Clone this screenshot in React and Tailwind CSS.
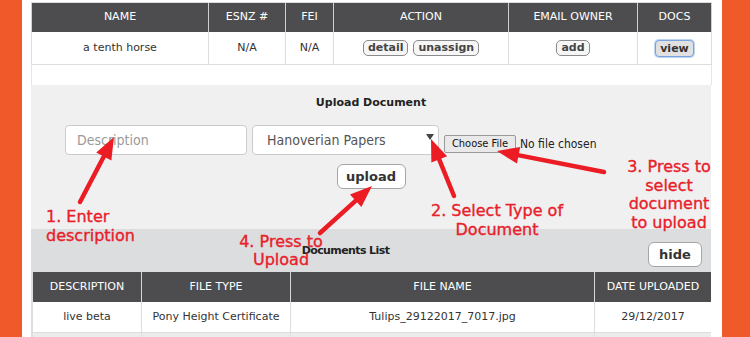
import React from "react";

function Arrow({ x1, y1, x2, y2 }) {
  const L = 22;
  const W = 8.5;
  const dx = x2 - x1;
  const dy = y2 - y1;
  const len = Math.sqrt(dx * dx + dy * dy);
  const ux = dx / len;
  const uy = dy / len;
  const bx = x2 - ux * L;
  const by = y2 - uy * L;
  const px = -uy;
  const py = ux;
  const pts = `${x2},${y2} ${bx + px * W},${by + py * W} ${bx - px * W},${by - py * W}`;
  return (
    <g>
      <line x1={x1} y1={y1} x2={bx + ux * 2} y2={by + uy * 2} stroke="#ec1c24" strokeWidth="4.5" strokeLinecap="round" />
      <polygon points={pts} fill="#ec1c24" />
    </g>
  );
}

function SmallBtn({ children, view }) {
  return (
    <span
      className={
        view
          ? "inline-block px-[4px] h-[17px] leading-[15px] rounded-[4px] border border-[#7ba4dc] bg-[#e1e1e1] font-bold text-[11px] text-[#333] shadow-[0_0_0_1px_#bcd3f0]"
          : "inline-block px-[4px] h-[16px] leading-[14px] rounded-[5px] border border-[#8a8a8a] bg-[#f6f6f6] font-bold text-[11px] text-[#444]"
      }
    >
      {children}
    </span>
  );
}

export default function App() {
  const topCols = [
    { w: "w-[178px] border-l", h: "NAME", d: "a tenth horse" },
    { w: "w-[77px]", h: "ESNZ #", d: "N/A" },
    { w: "w-[48px]", h: "FEI", d: "N/A" },
    { w: "w-[175px]", h: "ACTION", d: "action" },
    { w: "w-[129px]", h: "EMAIL OWNER", d: "add" },
    { w: "w-[74px]", h: "DOCS", d: "view" },
  ];
  const docCols = [
    { w: "w-[109px]", h: "DESCRIPTION", d: "live beta" },
    { w: "w-[149px]", h: "FILE TYPE", d: "Pony Height Certificate" },
    { w: "w-[304px]", h: "FILE NAME", d: "Tulips_29122017_7017.jpg" },
    { w: "w-[116px]", h: "DATE UPLOADED", d: "29/12/2017" },
  ];

  const note = "text-[16px] text-[#e8202a] [-webkit-text-stroke:0.35px_#e8202a]";

  return (
    <div className="relative w-[750px] h-[337px] overflow-hidden bg-[#f05a2a] font-['DejaVu_Sans',sans-serif]">
      <div className="ml-[22px] w-[700px] h-[337px] bg-white pl-[9px] pt-[2px] flex flex-col overflow-hidden">
        {/* Top table */}
        <div className="w-[681px] shrink-0">
          <div className="flex h-[30px] bg-[#4d4d4f] border-t border-[#dddddd]">
            {topCols.map((c, i) => (
              <div
                key={i}
                className={`${c.w} border-r border-[#cfcfcf] flex items-center justify-center text-white text-[11px]`}
              >
                {c.h}
              </div>
            ))}
          </div>
          <div className="flex h-[33px] bg-white border-b border-[#dddddd]">
            {topCols.map((c, i) => (
              <div
                key={i}
                className={`${c.w} border-r border-[#dddddd] flex items-center justify-center text-[#333] text-[11px] gap-[5px]`}
              >
                {i === 3 ? (
                  <>
                    <SmallBtn>detail</SmallBtn>
                    <SmallBtn>unassign</SmallBtn>
                  </>
                ) : i === 4 ? (
                  <SmallBtn>add</SmallBtn>
                ) : i === 5 ? (
                  <SmallBtn view>view</SmallBtn>
                ) : (
                  c.d
                )}
              </div>
            ))}
          </div>
          <div className="h-[20px] border-l border-r border-[#e6e6e6]" />
        </div>

        {/* Upload panel */}
        <div className="w-[680px] h-[144px] shrink-0 bg-[#f0f0f0] flex flex-col">
          <div className="h-[26px] shrink-0 flex items-end justify-center text-[11px] font-bold text-[#222]">
            Upload Document
          </div>
          <div className="mt-[14px] pl-[34px] flex items-center h-[30px] shrink-0">
            <div className="w-[182px] h-[30px] bg-white border border-[#cccccc] rounded-[4px] flex items-center pl-[11px] text-[14px] text-[#9a9a9a] font-['DejaVu_Sans_Condensed','DejaVu_Sans',sans-serif] font-stretch-condensed">
              Description
            </div>
            <div className="ml-[5px] w-[187px] h-[30px] bg-white border border-[#cccccc] rounded-[4px] flex items-center justify-between pl-[14px] pr-[4px] text-[14px] text-[#555] font-['DejaVu_Sans_Condensed','DejaVu_Sans',sans-serif] font-stretch-condensed">
              <span>Hanoverian Papers</span>
              <svg width="8" height="6" viewBox="0 0 8 6" className="mb-[6px]">
                <polygon points="0,0 8,0 4,6" fill="#444" />
              </svg>
            </div>
            <div className="ml-[5px] mt-[8px] w-[72px] h-[18px] bg-[#e9e9e9] border border-[#9a9a9a] rounded-[2px] flex items-center justify-center text-[11px] text-[#111] font-['DejaVu_Sans_Condensed','DejaVu_Sans',sans-serif] font-stretch-condensed">
              Choose File
            </div>
            <span className="ml-[4px] mt-[8px] text-[12px] text-[#222] font-['DejaVu_Sans_Condensed','DejaVu_Sans',sans-serif] font-stretch-condensed">
              No file chosen
            </span>
          </div>
          <div className="mt-[9px] flex justify-center shrink-0">
            <div className="w-[69px] h-[25px] bg-white border border-[#a5a5a5] rounded-[6px] flex items-center justify-center text-[13px] font-bold text-[#333]">
              upload
            </div>
          </div>
        </div>

        {/* Documents panel */}
        <div className="w-[680px] h-[200px] shrink-0 bg-[#dcdddf] flex flex-col">
          <div className="h-[43px] shrink-0 flex">
            <div className="flex-1 flex items-center justify-center pl-[12px] pt-[1px] text-[11px] font-bold text-[#222] tracking-[-0.6px]">
              Documents List
            </div>
            <div className="self-end mb-[5px] mr-[9px] w-[54px] h-[25px] bg-white border border-[#a5a5a5] rounded-[6px] flex items-center justify-center text-[13px] font-bold text-[#333]">
              hide
            </div>
          </div>
          <div className="pl-[2px] shrink-0">
            <div className="flex h-[30px] bg-[#4d4d4f]">
              {docCols.map((c, i) => (
                <div
                  key={i}
                  className={`${c.w} ${i < 3 ? "border-r border-[#d6d6d6]" : ""} flex items-center justify-center text-white text-[11px]`}
                >
                  {c.h}
                </div>
              ))}
            </div>
            <div className="flex h-[31px] bg-white border-b border-[#dddddd]">
              {docCols.map((c, i) => (
                <div
                  key={i}
                  className={`${c.w} ${i < 3 ? "border-r border-[#dddddd]" : ""} flex items-center justify-center text-[#333] text-[11px]`}
                >
                  {c.d}
                </div>
              ))}
            </div>
            <div className="flex h-[30px] bg-[#ececec]">
              {docCols.map((c, i) => (
                <div key={i} className={`${c.w} ${i < 3 ? "border-r border-[#dddddd]" : ""}`} />
              ))}
            </div>
          </div>
        </div>
      </div>

      {/* Annotation arrows */}
      <svg className="absolute left-0 top-0 pointer-events-none" width="750" height="337">
        <Arrow x1={80} y1={202} x2={114} y2={137} />
        <Arrow x1={454} y1={196} x2={431} y2={139} />
        <Arrow x1={604} y1={172} x2={497} y2={151} />
        <Arrow x1={320} y1={233} x2={372} y2={186} />
      </svg>

      {/* Annotation labels */}
      <div className={`absolute left-[46px] top-[207px] leading-[19px] ${note}`}>
        1. Enter
        <br />
        description
      </div>
      <div className={`absolute left-[407px] top-[202px] w-[180px] text-center leading-[18.5px] ${note}`}>
        2. Select Type of
        <br />
        Document
      </div>
      <div className={`absolute left-[614px] top-[158px] w-[110px] text-center leading-[18.5px] ${note}`}>
        3. Press to
        <br />
        select
        <br />
        document
        <br />
        to upload
      </div>
      <div className={`absolute left-[226px] top-[233px] w-[110px] text-center leading-[18px] ${note}`}>
        4. Press to
        <br />
        Upload
      </div>
    </div>
  );
}
